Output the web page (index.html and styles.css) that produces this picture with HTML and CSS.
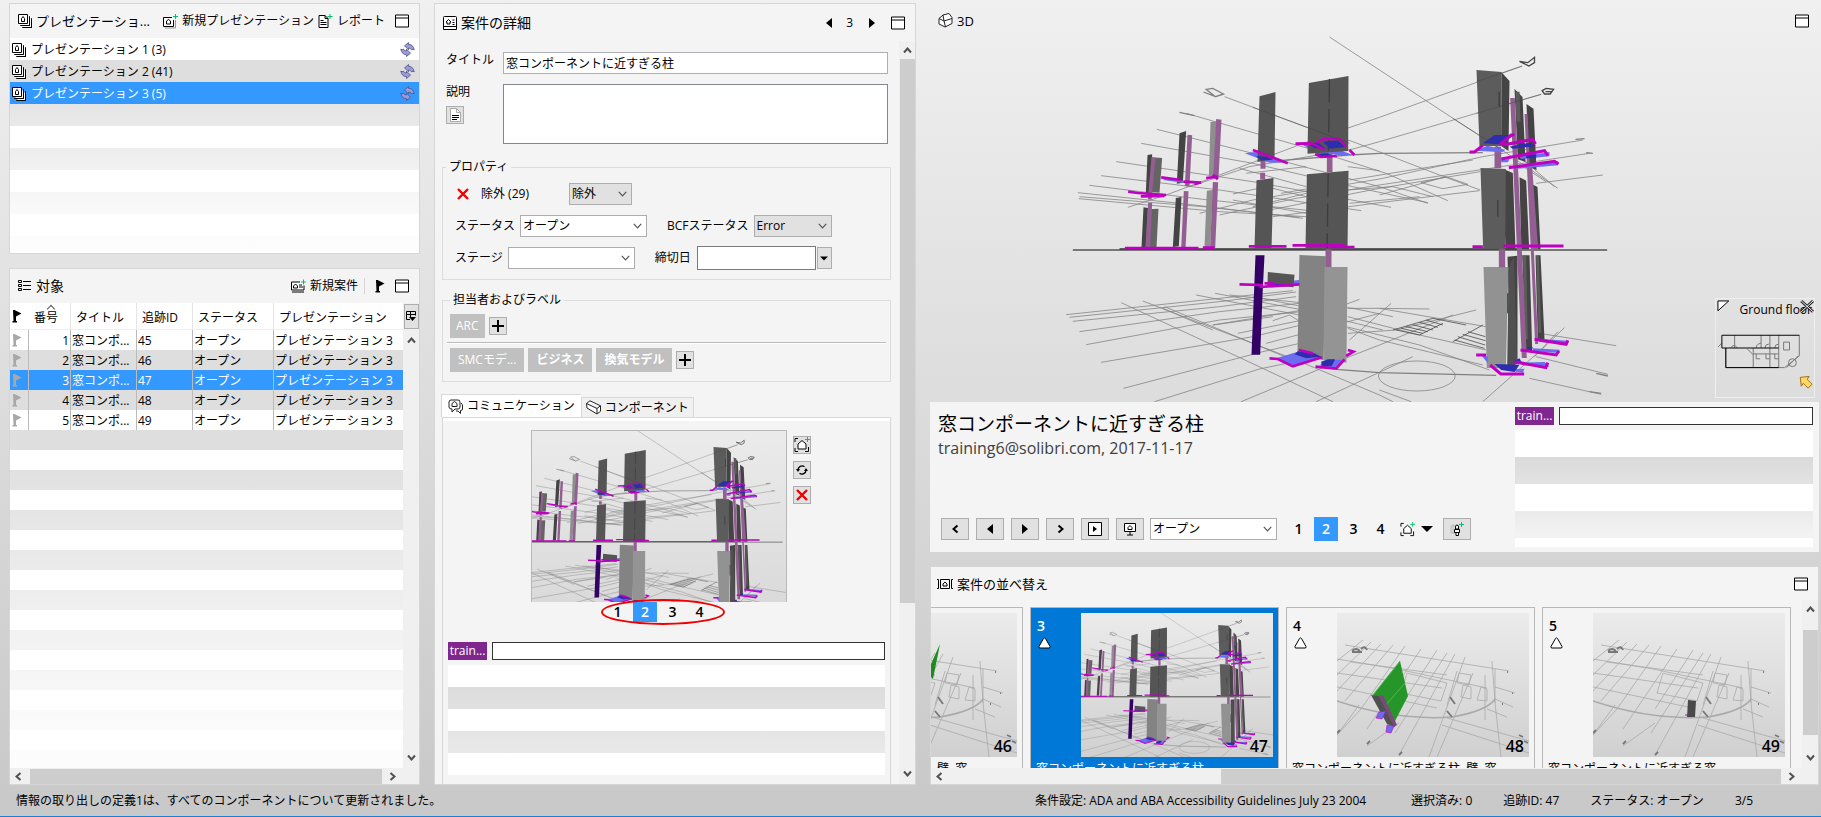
FILE: index.html
```
<!DOCTYPE html>
<html lang="ja">
<head>
<meta charset="utf-8">
<title>プレゼンテーション</title>
<link rel="stylesheet" href="styles.css">
</head>
<body>
<svg class="defs" aria-hidden="true">
  <symbol id="i-stack" viewBox="0 0 14 14"><g fill="#fff" stroke="#000"><path d="M4.5 13.500h9v-9"/><path d="M2.500 11.500h9v-9"/><path d="M.5.500h9v9h-9z"/><path d="M11.500 2.500v9h-9M13.500 4.500v9h-9" fill="none"/><path d="M3.500 7.500v-3l1.500-2 1.500 2v3z" stroke-width="1"/></g></symbol>
  <symbol id="i-newpres" viewBox="0 0 15 15"><path d="M12.500 6v8H2" fill="none" stroke="#999"/><path d="M9 3.500H.5v9h10V6" fill="#fff" stroke="#000"/><path d="M3.500 10v-3l2-1.500 2 1.500v3z" fill="#fff" stroke="#000"/><path d="M12.500 0v5M10 2.500h5" stroke="#00c070"/></symbol>
  <symbol id="i-report" viewBox="0 0 14 15"><path d="M.5 1.500h6l3 3v9h-9z" fill="#fff" stroke="#000"/><path d="M6.500 1.500v3h3M2 6.500h3M2 8.500h6M2 10.500h6" fill="none" stroke="#000"/><path d="M11.500 0v5M9 2.500h5" stroke="#00c070"/></symbol>
  <symbol id="i-window" viewBox="0 0 14 13"><path d="M.5.500h13v12H.5zM.5 3.500h13" fill="#fff" stroke="#000"/></symbol>
  <symbol id="i-sync" viewBox="0 0 15 15"><g fill="#9c9cd4" stroke="#50508c" stroke-width=".8"><path id="sync-half" d="M4.500 3.800 8.500.500v1.800q4.800 0 5.700 5.700l-1.200-.8-1.400.8q-.6-2-3.100-2v1.800z"/><path d="M10.500 11.200 6.500 14.500v-1.800q-4.800 0-5.700-5.700l1.200.8 1.400-.8q.6 2 3.100 2V7.200z"/></g></symbol>
  <symbol id="i-list" viewBox="0 0 14 12"><path d="M.5.500h3v2h-3zM.5 4.500h3v2h-3zM.5 8.500h3v2h-3z" fill="#fff" stroke="#000"/><path d="M5 1.500h8M5 5.500h8M5 9.500h8" stroke="#000"/></symbol>
  <symbol id="i-newcase" viewBox="0 0 15 14"><path d="M9 2.500H.5v8H13V6" fill="#fff" stroke="#000"/><path d="M1 12.500h12" stroke="#000"/><path d="M2.500 8.500v-2l2-2 2 2v2zM8 5.500h3M8 7.500h4" fill="none" stroke="#000"/><path d="M12.500 0v5M10 2.500h5" stroke="#00c070"/></symbol>
  <symbol id="i-flag" viewBox="0 0 10 13"><path d="M1 0h1.500l7 3.500-5.500 3V11h1v1.500H.5V11h1z" fill="currentColor"/></symbol>
  <symbol id="i-detail" viewBox="0 0 14 14"><path d="M.5 1.500q0-1 1-1h11q1 0 1 1v12H.5z" fill="#fff" stroke="#000"/><path d="M1 10.500h12" stroke="#000"/><path d="M3 6h1v2h3V6h1L5.500 3.500zM9.500 4h2M9.500 6.500h2M9.500 8.500h2" fill="none" stroke="#000"/></symbol>
  <symbol id="i-up" viewBox="0 0 9 7"><path d="m1 5.500 3.500-4 3.500 4" fill="none" stroke="#505050" stroke-width="2"/></symbol>
  <symbol id="i-down" viewBox="0 0 9 7"><path d="m1 1.500 3.500 4 3.500-4" fill="none" stroke="#505050" stroke-width="2"/></symbol>
  <symbol id="i-left" viewBox="0 0 7 9"><path d="m5.500 1-4 3.500 4 3.500" fill="none" stroke="currentColor" stroke-width="2"/></symbol>
  <symbol id="i-right" viewBox="0 0 7 9"><path d="m1.500 1 4 3.500-4 3.500" fill="none" stroke="currentColor" stroke-width="2"/></symbol>
  <symbol id="i-tleft" viewBox="0 0 6 10"><path d="M6 0v10L0 5z"/></symbol>
  <symbol id="i-tright" viewBox="0 0 6 10"><path d="M0 0v10l6-5z"/></symbol>
  <symbol id="i-tdown" viewBox="0 0 12 6"><path d="M0 0h12L6 6z"/></symbol>
  <symbol id="i-x" viewBox="0 0 12 12"><path d="m1 1 10 10M11 1 1 11" stroke="#f00000" stroke-width="2.400"/></symbol>
  <symbol id="i-doc" viewBox="0 0 11 14"><path d="M.5.500h6l4 4v9H.5z" fill="#fff" stroke="#aaa"/><path d="M6.500.500v4h4" fill="none" stroke="#aaa"/><path d="M2 7.500h7M2 9.500h7M2 11.500h5" stroke="#000"/></symbol>
  <symbol id="i-plus" viewBox="0 0 12 12"><path d="M6 0v12M0 6h12" stroke="#000" stroke-width="2"/></symbol>
  <symbol id="i-talk" viewBox="0 0 15 15"><path d="M3 1h7q2 0 2 2v5q0 2-2 2H7l-3 3v-3q-3 0-3-2V3q0-2 2-2z" fill="#fff" stroke="#222"/><path d="M4 7.500v-3l2.500-2L9 4.500v3z" fill="none" stroke="#222"/><path d="M13 4q1.500 1 1.500 3v3q0 1.500-2 1.500v3L10 12H8" fill="none" stroke="#222"/></symbol>
  <symbol id="i-beam" viewBox="0 0 15 15"><path d="M.5 3.500 4 .8l10.500 5v5.500L11 14 1 8zM.5 3.500 11 8.500l3.500-2.700M11 8.500V14" fill="#fff" stroke="#222"/></symbol>
  <symbol id="i-snap" viewBox="0 0 16 16"><path d="M1 5V1.500h3M1 11v3.500h3M14.500 10v4.500H11" fill="none" stroke="#000"/><path d="M4 12V7l4-3.500L12 7v5z" fill="#fff" stroke="#000"/><path d="M13.500 0v5M11 2.500h5" stroke="#00c070"/></symbol>
  <symbol id="i-refresh" viewBox="0 0 12 12"><path d="M2 6A4 4 0 0 1 8.500 2.800M10 6A4 4 0 0 1 3.500 9.200" fill="none" stroke="#000" stroke-width="1.300"/><path d="M0 5h4L2 8zM12 7H8l2-3z"/></symbol>
  <symbol id="i-cube" viewBox="0 0 15 15"><path d="m5 2 6-1.500 3 4v6L7 14 1 11V5.500zM1 5.500 6 8l1.500 6M6 8l8-2.500M6 8 5 2" fill="#fff" stroke="#222"/></symbol>
  <symbol id="i-play" viewBox="0 0 14 14"><path d="M.5.500h13v13H.5z" fill="#fff" stroke="#000"/><path d="M5 4v6l4-3z"/></symbol>
  <symbol id="i-screen" viewBox="0 0 14 14"><path d="M1.500 1.500h11v8h-11z" fill="#fff" stroke="#000"/><path d="M7 10v3M4 13h6M5 7.500v-2L7 3.500l2 2v2z" fill="none" stroke="#000"/></symbol>
  <symbol id="i-person" viewBox="0 0 14 14"><path d="M1 4h8v7H1zM3 2v10" fill="none" stroke="#bbb"/><path d="M5.500 5q0-2 1.500-2t1.500 2v2H5.500zM4.500 7.500h5v3h-5zM6 10.500v3h2.500v-3" fill="#fff" stroke="#000"/><path d="M11.500 0v5M9 2.500h5" stroke="#00c070"/></symbol>
  <symbol id="i-sort" viewBox="0 0 16 12"><path d="M0 1.500h1.500v9H0M16 1.500h-1.500v9H16M3.500 1.500h9v9h-9z" fill="none" stroke="#000"/><path d="M6 8V6l2-2 2 2v2z" fill="none" stroke="#000"/></symbol>
  <symbol id="i-cols" viewBox="0 0 10 11"><path d="M.5.500h9v4M.5.500v8H4M.5 3.500h9M4.500.500v6" fill="none" stroke="#000"/><path d="M3 6h7L6.500 10z"/></symbol>
  <symbol id="i-tri" viewBox="0 0 13 12"><path d="M5.500 1.500q1-1.200 2 0l4.500 8q.5 1.500-1 1.500H2q-1.500 0-1-1.500z" fill="#fff" stroke="#000"/></symbol>
  <symbol id="i-chev" viewBox="0 0 9 6"><path d="m.8.800 3.700 4 3.700-4" fill="none" stroke="#555" stroke-width="1.200"/></symbol>

  <!-- Building model: upper grid, columns per storey, lower grid -->
  <g id="model">
    <g fill="none" stroke="#808080" stroke-width="2.300">
      <path d="M1230 111 1380 210 1605 358 1740 445 1915 565M915 290 1165 383 1300 425 1560 525 1682 570M800 340 1165 445 1400 520 1585 602M712 388 1000 460 1380 560 1525 610M665 430 1000 490 1300 560 1525 608M590 485 1000 545 1415 622M545 527 900 570 1325 632M510 556 850 598 1200 635"/>
      <path d="M475 578 800 612 1150 655M480 590 850 620 1140 652M478 596 900 635 1160 650"/>
      <path d="M1808 198 1380 352 1165 425 900 525 740 585 625 622M1865 283 1380 425 1300 447 990 500 810 560M1990 420 1690 470 1380 537 1000 600 840 640M2010 460 1380 555 1130 595 900 645M2050 525 1850 550M1680 572 1380 608 1060 650M1682 515 1380 565 1050 630"/>
      <path d="M1040 485 1290 465 1380 460 1690 458" stroke-width="4"/>
      <path d="M940 582 1040 560 1160 590M960 505 1160 560M1285 500 1380 512M1085 580 1160 567M1505 548 1580 530 1645 553 1570 566zM1380 585 1580 530M1780 480 1880 545M1800 470 1905 560"/>
      <path d="M980 520 1160 500M1000 620 1160 580M940 600 1160 640M1290 540 1660 480M1285 570 1420 560 1540 590M1290 610 1500 590"/>
      <path d="M440 944 900 895 1120 872M450 952 900 905 1130 876M460 964 900 920 1130 890M480 995 900 935 1140 910M500 1034 900 960 1145 935M545 1087 1000 1010 1145 975M612 1165 1030 1055 1150 1028M705 1205 1020 1107 1150 1080"/>
      <path d="M605 908 1030 1105 1240 1205M670 903 1130 1080 1380 1185 1420 1205M735 920 1120 1080M830 885 1140 945 1500 1035 1710 1110M887 880 1140 928 1390 990M930 885 1300 925 1420 950M1060 962 1110 945 1150 970M1000 890 1150 920"/>
      <path d="M965 1205 1290 1070 1380 1035 1600 945M1190 1205 1330 1140 1480 1070M955 1000 1150 960 1320 898M880 975 1150 930M1040 1030 1380 940M1285 1000 1430 990 1670 930M1290 1020 1415 910M1285 925 1380 925 1530 927M1380 925 1700 980M1285 985 1380 1020 1690 1095M1285 950 1500 1005 1700 1050"/>
      <path d="M1250 1108 1380 1118 1730 1126" stroke-width="4"/>
      <ellipse cx="1492" cy="1128" rx="115" ry="45"/>
      <path d="M1860 1000 2090 1037M1850 1070 2065 1123M1830 1135 2045 1183M1690 1205 1870 1045 1935 983M1845 1070 1915 995M1380 1170 1475 1205M880 975 1060 950M730 925 880 990"/>
      <path d="M860 268 880 265 912 282 888 290zM852 276 888 290M780 337 825 347M1968 418 1995 416M2000 458 2020 460M2030 1120 2065 1128M2010 1175 2045 1180" stroke-width="4"/>
      <path d="M1800 184 1825 188 1845 172 1845 188 1828 198zM1868 272 1880 265 1902 268 1892 282 1875 282zM1878 275h18" stroke="#444" stroke-width="4"/>
      <path d="M1420 990 1540 955 1640 975M1430 990 1500 1005 1570 970M1445 985 1510 1000M1460 980 1525 995M1480 974 1540 990M1500 967 1555 982M1520 960 1570 975M1600 1025 1690 975M1605 1020 1695 1045M1615 1010 1697 1035M1630 1003 1698 1022M1645 995 1698 1010" stroke="#444"/>
    </g>
    <path d="M460 750h1603" stroke="#555" stroke-width="4"/><path d="M600 747H1800" stroke="#333" stroke-width="4"/>

    <!-- left-hand columns -->
    <g fill="#444"><path d="m684 465 14-2-5 117h-14zM780 400l20-7-10 155-18 3zM672 622l14 2-5 118h-15zM769 594l17-3-8 148-18 2z"/></g>
    <g fill="#646464"><path d="m697 472 31 2-8 104-31-2zM684 628l33-2-6 116h-33z"/></g>
    <g fill="#8e8e8e"><path d="m873 366 18-2-7 161-16 3zM862 572l18-2-8 172h-17z"/></g>
    <g fill="#935f93"><path d="m696 472 12 1-12 126-11-1zM686 608l12 1-6 134h-14zM804 404l14 2-8 154-14-3zM793 573l14 1-9 172h-13zM890 357l16 2-9 175-16-2zM880 546l16 1-9 198h-15zM1023 480h15v26h-15zM1022 518h15v20h-15zM1222 452h17v64h-17zM1218 748h18v56h-18z"/></g>
    <g fill="#6c6cf0"><path d="m976 460 30-4 85 32h-40zM1150 435l40-10 105 38-20 4-90-10zM740 535l55 8v6l-65-9zM1118 842l22-2v10l-22 4z"/></g>
    <g fill="#555"><path d="m1020 289 48-13-3 200-51 10zM1168 249l119-21-1 225-122 8zM1011 541l51-7-6 211h-51zM1162 523l125-11-3 236h-126zM1045 816l80 8-3 38-78-6z"/></g>
    <path d="m1230 237-3 215M1226 520l-3 225" stroke="#3d3d3d" stroke-width="4" stroke-dasharray="70 20"/>
    <g fill="#2d2db0"><path d="m1165 432 30-5 25 20-35-3zM1210 425l45-4 22 20-45 5zM1010 468l30 2 20 10-35 1zM1190 460l35 0 15 8-35 2zM1045 852h60l-30 8z"/></g>
    <path d="m1008 766h27l-6 120-7 178h-26z" fill="#330066"/>
    <path d="M1140 765l80 4-8 312-78-25z" fill="#838383"/><path d="M1215 801h69l-3 287-69-8z" fill="#949494"/>
    <g fill="#6c6cf0"><path d="m1065 1076 75-22 65 18-80 25zM1200 1096l30-17 45 0-30 27z"/></g>
    <g fill="#2d2db0"><path d="m1135 1054 50 6 20 10-45 5-35-12zM1205 1085l20-7h22l-10 20-30 3z"/></g>
    <g fill="none" stroke="#c000c0" stroke-width="8">
      <path d="M626 575 655 579 740 585M664 589 735 588M725 532 785 540M792 545 845 548M825 553 845 547M860 534 895 530M880 524 895 538M1000 450 1105 490M1128 431 1175 430 1215 449M1190 428 1215 416 1260 417 1280 440M1290 450 1305 465M1187 462 1205 471 1252 468M988 739h113M1119 736 1275 736M1230 741h75M616 744H837M850 743h35M960 853 1030 855M1020 861 1140 853M1035 850h30M1050 1075 1075 1077 1120 1099 1208 1072M1188 1100 1250 1106 1275 1078M1280 1068 1302 1055 1285 1050M1138 1050 1180 1060"/>
    </g>

    <!-- right-hand columns -->
    <g fill="#444"><path d="m1746 217 24 26-3 210-22-15zM1785 267l24 24 9 195-23-8zM1821 312l21 14 9 184-22-10zM1750 506l30 13 8 228h-30zM1800 532l20 10 9 206h-24zM1838 553l16 8 9 187h-20zM1764 770l30-3 0 320-20 14zM1808 766h22l8 284-18 5zM1848 766h15l12 252-20 4z"/></g>
    <g fill="#5c5c5c"><path d="M1671 210l75 6-1 222h-65zM1683 504l76 3-2 240h-66zM1788 275h12l3 90h-12zM1810 768h10l5 250h-10zM1850 768h8l7 230h-8z"/></g>
    <path d="M1692 801h75l-8 303h-57z" fill="#929292"/><path d="m1768 801 15-30 10 320-30 14z" fill="#505050"/>
    <path d="m1739 275v45M1735 600v50M1765 880v60" stroke="#3d3d3d" stroke-width="4"/>
    <g fill="#935f93"><path d="M1725 440h20v65h-20zM1738 748h19v54h-19zM1772 294h14l36 780h-15zM1815 342h9l32 690h-9zM1824 500h14l18 248h-14z"/></g>
    <g fill="#6c6cf0"><path d="m1668 452 35-15 55 12-10 8zM1745 480l25-3-5 10h-20zM1796 500l120-16v12l-120 10zM1800 470l90-14v13l-85 8zM1685 1065l20 5v20zM1780 1108l35-2 -5 12-60-10zM1800 1088l75-2 15 14-80-4zM1840 1045l80 4v10l-80-5zM1855 1016l90 6v10l-85-6z"/></g>
    <g fill="#2d2db0"><path d="m1690 430 35-25h60l-45 28zM1770 440l60-12 20 10-70 8zM1820 465l30-2v12h-30zM1725 1092l75 2-15 22-40-6zM1780 1085l20-10 8 15zM1820 1042h20l-5 12z"/></g>
    <g fill="none" stroke="#c000c0" stroke-width="9">
      <path d="M1650 456h15l25-20M1740 435l35-30h10M1750 435 1840 418l8 14M1745 477 1875 452l10 15M1768 503 1905 484l12 8M1659 740h31M1752 738h180M1670 1065h30M1712 1095l32 27h70M1785 1085l94 18 6-15M1803 1050 1910 1065l8-12M1845 1018l95 15 5-12"/>
    </g>
    <g stroke="#444" stroke-width="2" opacity=".7"><path d="M1000 322 1165 383 1290 430M1671 245 1808 198M1671 340 1865 283M1600 355 1740 445"/></g>
  </g>

  <!-- Floor plan seen from above -->
  <g id="floor" fill="none" stroke="#aaa" stroke-width=".8">
    <path d="M8 32 160 56M0 46 60 56 150 75M14 49 110 62M0 60 105 75M0 74 100 95M26 27 0 48M34 29 0 62M44 31 0 78M56 32 8 88M68 33 24 96M84 36 30 116M100 37 62 96M110 40 58 120M118 41 62 142M128 44 92 144M136 60 100 144M155 48 158 90 164 144M120 58 110 92M148 62v45"/>
    <path d="M0 88Q60 108 115 104 150 98 158 86" stroke-width="1.500"/>
    <path d="M158 56v34M22 92 0 122M62 110 30 133M0 122 24 96M110 105 192 128M105 112 192 140M70 60l40 10-6 18-40-8zM122 60l12 2-2 10-12-2zM126 72l8 2v12l-10-2zM144 74l6 2v12l-10-1z"/>
    <path d="M15 38q4-4 8 0M24 36q4-4 6 1M15 39h10M113 84l5 7M110 98l5 6M0 120l3-3M30 131l3-3M62 142l3-3M170 59h1M175 80h1M165 91h1M182 122l4 2M187 128l4 2" stroke="#777" stroke-width="1.800"/>
    <path d="M160 56l12 2M158 74l20 6M158 86l18 8M150 96l20 8"/>
  </g>
</svg>

<main class="app">
  <div class="column">
    <section class="panel">
      <header class="bar">
        <svg class="s14"><use href="#i-stack"/></svg><h2 class="grow narrow">プレゼンテーショ...</h2>
        <button class="link"><svg class="s15"><use href="#i-newpres"/></svg>新規プレゼンテーション</button>
        <button class="link"><svg class="s15"><use href="#i-report"/></svg>レポート</button>
        <button class="link win" aria-label="最大化"><svg class="s14"><use href="#i-window"/></svg></button>
      </header>
      <ul class="pres stripes22">
        <li><svg class="s14"><use href="#i-stack"/></svg><span>プレゼンテーション 1 (3)</span><svg class="s15"><use href="#i-sync"/></svg></li>
        <li><svg class="s14"><use href="#i-stack"/></svg><span>プレゼンテーション 2 (41)</span><svg class="s15"><use href="#i-sync"/></svg></li>
        <li class="selected"><svg class="s14"><use href="#i-stack"/></svg><span>プレゼンテーション 3 (5)</span><svg class="s15"><use href="#i-sync"/></svg></li>
      </ul>
    </section>

    <section class="panel fill">
      <header class="bar">
        <svg class="s14"><use href="#i-list"/></svg><h2 class="grow">対象</h2>
        <button class="link"><svg class="s15"><use href="#i-newcase"/></svg>新規案件</button>
        <span class="sep"></span>
        <button class="link" aria-label="フラグ"><svg class="flag"><use href="#i-flag"/></svg></button>
        <button class="link win" aria-label="最大化"><svg class="s14"><use href="#i-window"/></svg></button>
      </header>
      <div class="split">
        <div class="tablebox stripes20">
          <table>
            <colgroup><col class="c-flag"><col class="c-no"><col class="c-title"><col class="c-id"><col class="c-stat"><col></colgroup>
            <thead><tr><th><svg class="flag"><use href="#i-flag"/></svg></th><th class="sorted">番号</th><th>タイトル</th><th>追跡ID</th><th>ステータス</th><th>プレゼンテーション</th></tr></thead>
            <tbody>
              <tr><td><svg class="flag"><use href="#i-flag"/></svg></td><td>1</td><td>窓コンポ...</td><td>45</td><td>オープン</td><td>プレゼンテーション 3</td></tr>
              <tr><td><svg class="flag"><use href="#i-flag"/></svg></td><td>2</td><td>窓コンポ...</td><td>46</td><td>オープン</td><td>プレゼンテーション 3</td></tr>
              <tr class="selected"><td><svg class="flag"><use href="#i-flag"/></svg></td><td>3</td><td>窓コンポ...</td><td>47</td><td>オープン</td><td>プレゼンテーション 3</td></tr>
              <tr><td><svg class="flag"><use href="#i-flag"/></svg></td><td>4</td><td>窓コンポ...</td><td>48</td><td>オープン</td><td>プレゼンテーション 3</td></tr>
              <tr><td><svg class="flag"><use href="#i-flag"/></svg></td><td>5</td><td>窓コンポ...</td><td>49</td><td>オープン</td><td>プレゼンテーション 3</td></tr>
            </tbody>
          </table>
        </div>
        <div class="vbar">
          <button class="colbtn" aria-label="列"><svg><use href="#i-cols"/></svg></button>
          <svg class="arrow"><use href="#i-up"/></svg><span class="grow"></span><svg class="arrow"><use href="#i-down"/></svg>
        </div>
      </div>
      <div class="hbar"><svg class="harrow"><use href="#i-left"/></svg><span class="thumb grow"></span><svg class="harrow"><use href="#i-right"/></svg><span class="corner"></span></div>
    </section>
  </div>

  <section class="panel detail">
    <header class="bar tall">
      <svg class="s14"><use href="#i-detail"/></svg><h2 class="grow">案件の詳細</h2>
      <button class="link" aria-label="前へ"><svg class="tri"><use href="#i-tleft"/></svg></button><span class="num">3</span>
      <button class="link" aria-label="次へ"><svg class="tri"><use href="#i-tright"/></svg></button>
      <button class="link win far" aria-label="最大化"><svg class="s14"><use href="#i-window"/></svg></button>
    </header>
    <div class="split">
      <div class="form">
        <div class="fields">
          <label for="title">タイトル</label>
          <input id="title" value="窓コンポーネントに近すぎる柱">
          <div><label for="desc">説明</label><button class="tool" aria-label="文書"><svg class="doc"><use href="#i-doc"/></svg></button></div>
          <textarea id="desc"></textarea>
        </div>
        <fieldset class="props">
          <legend>プロパティ</legend>
          <div class="row first"><svg class="s12"><use href="#i-x"/></svg><label class="excl" for="decision">除外 (29)</label>
            <span class="sel grey w63"><select id="decision"><option>除外</option></select><svg><use href="#i-chev"/></svg></span></div>
          <div class="row"><label for="status">ステータス</label>
            <span class="sel w127"><select id="status"><option>オープン</option></select><svg><use href="#i-chev"/></svg></span>
            <label class="second" for="bcf">BCFステータス</label>
            <span class="sel grey w78"><select id="bcf"><option>Error</option></select><svg><use href="#i-chev"/></svg></span></div>
          <div class="row"><label for="stage">ステージ</label>
            <span class="sel w127"><select id="stage"><option></option></select><svg><use href="#i-chev"/></svg></span>
            <label class="second" for="due">締切日</label>
            <input id="due" class="due"><button class="drop" aria-label="日付"><svg><use href="#i-tdown"/></svg></button></div>
        </fieldset>
        <fieldset class="labels">
          <legend>担当者およびラベル</legend>
          <div class="row"><span class="tag">ARC</span><button class="tool" aria-label="担当者を追加"><svg class="s12"><use href="#i-plus"/></svg></button></div>
          <hr>
          <div class="row"><span class="tag wide">SMCモデ...</span><span class="tag wide bold">ビジネス</span><span class="tag wide bold">換気モデル</span><button class="tool" aria-label="ラベルを追加"><svg class="s12"><use href="#i-plus"/></svg></button></div>
        </fieldset>
        <div class="tabs">
          <button class="tab on"><svg class="s15"><use href="#i-talk"/></svg>コミュニケーション</button><button class="tab"><svg class="s15"><use href="#i-beam"/></svg>コンポーネント</button>
        </div>
        <div class="talk">
          <div class="shot">
            <span class="lead"></span>
            <svg class="view" viewBox="642 120 1440 970" preserveAspectRatio="xMidYMin slice"><use href="#model"/></svg>
            <div class="tools">
              <button class="tool" aria-label="撮影"><svg class="s16"><use href="#i-snap"/></svg></button>
              <button class="tool" aria-label="更新"><svg class="s12"><use href="#i-refresh"/></svg></button>
              <button class="tool" aria-label="削除"><svg class="s12"><use href="#i-x"/></svg></button>
            </div>
          </div>
          <div class="pager small"><button>1</button><button class="on">2</button><button>3</button><button>4</button>
            <svg class="ring" viewBox="0 0 124 26"><ellipse cx="62" cy="13" rx="61" ry="12" fill="none" stroke="#f00000" stroke-width="1.800"/></svg></div>
          <div class="comment"><label class="user" for="c1">train...</label><input id="c1"></div>
          <div class="notes stripes22"></div>
        </div>
      </div>
      <div class="vbar pad"><svg class="arrow"><use href="#i-up"/></svg><span class="thumb t74"></span><span class="grow"></span><svg class="arrow"><use href="#i-down"/></svg></div>
    </div>
  </section>

  <div class="column right">
    <section class="scene">
      <svg class="model" viewBox="30 0 2670 1206" preserveAspectRatio="xMidYMid slice"><use href="#model"/></svg>
      <header class="bar tall clear"><svg class="s15"><use href="#i-cube"/></svg><h2 class="grow narrow">3D</h2>
        <button class="link win" aria-label="最大化"><svg class="s14"><use href="#i-window"/></svg></button></header>
      <div class="minimap"><span>Ground floor</span>
        <svg viewBox="0 0 100 100">
          <path d="M2 2h11L2 12z" fill="#fff" stroke="#000"/>
          <path d="m87 2 12 11M99 2 87 13" stroke="#222" stroke-width="3"/><path d="m87 2 12 11M99 2 87 13" stroke="#fff"/>
          <g fill="none" stroke="#777"><path d="M10 50v20h54M19 37v13M46 37v13M55 37v33M64 37v33M85 37v21L70 70h-6M38 50v20M38 56h26M69 44h6v8h-6z"/><circle cx="78" cy="65" r="4"/><path d="m72 70 12-12M41 50q0-4 5-5M50 50q0-4 4-4M60 50q0-4 4-4M41 56v5h4M51 56v5h4M60 56v5h4M2 49l4-4M15 50q3-5 7 0M32 51l6 6"/></g>
          <path d="M85 37H6v13h58M10 50v20h54" fill="none" stroke="#000"/>
          <path d="m86 80 9-1-2 3 5 5-4 4-5-5-2 3z" fill="#ffd868" stroke="#a07010"/>
        </svg></div>
    </section>
    <section class="info">
      <div class="infomain">
        <h1>窓コンポーネントに近すぎる柱</h1>
        <p>training6@solibri.com, 2017-11-17</p>
        <div class="controls">
          <button class="cbtn" aria-label="最初"><svg class="h79"><use href="#i-left"/></svg></button>
          <button class="cbtn" aria-label="前へ"><svg class="tri"><use href="#i-tleft"/></svg></button>
          <button class="cbtn" aria-label="次へ"><svg class="tri"><use href="#i-tright"/></svg></button>
          <button class="cbtn" aria-label="最後"><svg class="h79"><use href="#i-right"/></svg></button>
          <button class="cbtn" aria-label="再生"><svg class="s14"><use href="#i-play"/></svg></button>
          <button class="cbtn" aria-label="画面"><svg class="s14"><use href="#i-screen"/></svg></button>
          <span class="sel w127"><select aria-label="ステータス"><option>オープン</option></select><svg><use href="#i-chev"/></svg></span>
          <div class="pager"><button>1</button><button class="on">2</button><button>3</button><button>4</button></div>
          <button class="link snap" aria-label="撮影"><svg class="s15"><use href="#i-snap"/></svg><svg class="dd"><use href="#i-tdown"/></svg></button>
          <button class="cbtn" aria-label="追加"><svg class="s14"><use href="#i-person"/></svg></button>
        </div>
      </div>
      <div class="infoside">
        <div class="comment"><label class="user" for="c2">train...</label><input id="c2"></div>
        <div class="notes stripes27"></div>
      </div>
    </section>
    <section class="panel sorter">
      <header class="bar"><svg class="s16"><use href="#i-sort"/></svg><h2 class="grow narrow">案件の並べ替え</h2>
        <button class="link win" aria-label="最大化"><svg class="s14"><use href="#i-window"/></svg></button></header>
      <div class="split">
        <div class="cards">
          <article class="card cut"><svg class="view" viewBox="0 0 192 144"><use href="#floor"/><path d="M102 60 115 31 108 66z" fill="#1f8a1f"/></svg><b>46</b><p class="tail">壁, 窓</p></article>
          <article class="card on"><span class="no">3</span><svg class="warn"><use href="#i-tri"/></svg><svg class="view" viewBox="642 120 1440 1080"><use href="#model"/></svg><b>47</b><p>窓コンポーネントに近すぎる柱</p></article>
          <article class="card"><span class="no">4</span><svg class="warn"><use href="#i-tri"/></svg><svg class="view" viewBox="0 0 192 144"><use href="#floor"/><path d="m36 82 27-34 8 35-14 27z" fill="#27962a"/><path d="m48 93 20-23M36 82l27-34" stroke="#4db850" fill="none"/><path d="m34 82 8 1 16 31-8-3z" fill="#505050"/><path d="m42 83 4-1 14 30-3 2z" fill="#7a4a7a"/><path d="m42 99 7-1-4 8-6-1zM50 112l7 1-3 7-5-1z" fill="#6c6cf0" stroke="#c000c0" stroke-width=".6"/></svg><b>48</b><p>窓コンポーネントに近すぎる柱, 壁, 窓</p></article>
          <article class="card"><span class="no">5</span><svg class="warn"><use href="#i-tri"/></svg><svg class="view" viewBox="0 0 192 144"><use href="#floor"/><path d="m95 87 8 1-1 16h-8z" fill="#4a4a4a"/><path d="M92 102h3" stroke="#c000c0"/></svg><b>49</b><p>窓コンポーネントに近すぎる窓</p></article>
        </div>
        <div class="vbar pad"><svg class="arrow"><use href="#i-up"/></svg><span class="thumb grow short"></span><svg class="arrow"><use href="#i-down"/></svg></div>
      </div>
      <div class="hbar"><svg class="harrow"><use href="#i-left"/></svg><span class="track"></span><span class="thumb t65"></span><svg class="harrow"><use href="#i-right"/></svg><span class="corner"></span></div>
    </section>
  </div>
</main>
<footer class="status"><span class="msg">情報の取り出しの定義1は、すべてのコンポーネントについて更新されました。</span>
  <div class="facts"><span class="rules">条件設定: ADA and ABA Accessibility Guidelines July 23 2004</span><span>選択済み: 0</span><span>追跡ID: 47</span><span>ステータス: オープン</span><span>3/5</span></div></footer>
</body>
</html>
```
FILE: styles.css
```
* { box-sizing: border-box; }
body {
  margin: 0; height: 100vh; display: flex; flex-direction: column;
  background: linear-gradient(#f0f0f0, #c8c8c8);
  border-bottom: 1px solid #1880d8;
  font: 12px/16px "Open Sans", "Noto Sans CJK JP", sans-serif; color: #000;
}
button, input, select, textarea { font: inherit; color: inherit; margin: 0; border-radius: 0; }
button { background: none; border: 0; padding: 0; display: flex; align-items: center; justify-content: center; }
h1, h2, p, ul { margin: 0; padding: 0; font-weight: normal; }
svg { display: block; flex: none; }
.defs { position: absolute; width: 0; height: 0; }
.grow { flex: 1; min-width: 0; }
.s12 { width: 12px; height: 12px; } .s14 { width: 14px; height: 14px; }
.s15 { width: 15px; height: 15px; } .s16 { width: 16px; height: 16px; }
.flag { width: 10px; height: 13px; } .tri { width: 6px; height: 10px; }
.h79 { width: 7px; height: 10px; } .doc { width: 11px; height: 14px; }

.app {
  flex: 1; min-height: 0; padding: 3px 2px 0 9px; display: grid; gap: 14px;
  grid-template-columns: minmax(0, 411fr) minmax(0, 482fr) minmax(0, 889fr);
  grid-template-rows: minmax(0, 1fr);
}
.column { display: flex; flex-direction: column; gap: 14px; min-height: 0; }
.panel { background: #f4f4f4; border: 1px solid #d6d6d6; display: flex; flex-direction: column; min-height: 0; }
.fill { flex: 1; }
.bar { display: flex; align-items: center; height: 34px; flex: none; padding: 0 10px 0 8px; }
.bar.tall { height: 37px; }
.bar h2 { font-size: 14px; line-height: 20px; padding-left: 4px; white-space: nowrap; }
.bar .narrow { font-size: 13px; }
.link { gap: 4px; white-space: nowrap; margin-left: 4px; }
.win { margin-left: 10px; }
.far { margin-left: 16px; }
.sep { width: 1px; height: 16px; background: #d6d6d6; margin: 0 6px; }
.num { margin: 0 12px 0 14px; }

.pres { list-style: none; height: 215px; }
.pres li { display: flex; align-items: center; height: 22px; padding: 1px 4px 0 2px; gap: 5px; }
.pres span { flex: 1; }
.pres li:nth-child(even) { background: #dedede; }
.pres .selected, tbody .selected { background: #3399ff; color: #fff; }
.stripes22 { background: linear-gradient(#fff0, #fffffff0 190px), repeating-linear-gradient(#fff 0 22px, #d8d8d8 22px 44px); }
.stripes27 { background: linear-gradient(#fff0 20px, #fffffff0 140px), repeating-linear-gradient(#fff 0 27px, #d8d8d8 27px 54px); }
.stripes20 { background: linear-gradient(#fff0 140px, #ffffffe8 430px), repeating-linear-gradient(#fff 0 20px, #dedede 20px 40px) 0 27px; }

.split { display: flex; flex: 1; min-height: 0; }
.tablebox { flex: 1; min-width: 0; overflow: hidden; }
table { border-collapse: separate; border-spacing: 0; table-layout: fixed; width: 100%; }
.c-flag { width: 19px; } .c-no { width: 42px; } .c-title { width: 66px; } .c-id { width: 56px; } .c-stat { width: 81px; }
th { height: 27px; background: #fff; font-weight: normal; text-align: left; padding: 3px 0 0 5px; border-right: 1px solid #e4e4e4; border-bottom: 1px solid #eee; white-space: nowrap; }
th:first-child, td:first-child { padding: 0 0 0 2px; }
th:first-child { border-right: 0; }
th.sorted { position: relative; }
th.sorted::before { content: ""; position: absolute; left: 19px; top: 3px; width: 5px; height: 5px; border: solid #555; border-width: 1px 0 0 1px; transform: rotate(45deg); }
td { height: 20px; padding: 1px 0 0 1px; white-space: nowrap; border-right: 1px solid #bbb; }
td:last-child, th:last-child { border-right: 0; }
td:nth-child(2) { text-align: right; padding-right: 1px; }
td .flag { color: #a8a8a8; }
tbody tr { background: #fff; }
tbody tr:nth-child(even) { background: #dedede; }

.vbar { width: 16px; flex: none; background: #f0f0f0; display: flex; flex-direction: column; align-items: center; padding-bottom: 2px; }
.vbar.pad { padding-top: 6px; }
.arrow { width: 9px; height: 7px; margin: 0 0 5px; }
.thumb { background: #cdcdcd; }
.vbar .thumb { width: 15px; }
.t74 { flex: 0 0 74%; }
.short { margin: 12px 0 19px; }
.colbtn { width: 15px; height: 25px; margin: 1px 0 8px; background: #e1e1e1; border: 1px solid #adadad; }
.colbtn svg { width: 10px; height: 11px; }
.hbar { display: flex; height: 16px; flex: none; align-items: center; background: #f0f0f0; color: #505050; }
.hbar .thumb { height: 15px; }
.harrow { width: 7px; height: 9px; margin: 0 8px 0 5px; }
.thumb + .harrow { margin: 0 5px 0 7px; }
.corner { width: 18px; }
.track { flex: 27; } .t65 { flex: 56; }

.form { flex: 1; min-width: 0; padding: 11px 7px 0 6px; overflow: hidden; display: flex; flex-direction: column; margin-right: 1px; }
.fields { display: grid; grid-template-columns: 57px 1fr; grid-template-rows: 22px 60px; gap: 10px 0; padding: 0 3px 0 5px; flex: none; }
.fields input, .fields textarea { width: 100%; height: 100%; background: #fff; border: 1px solid #adadb4; padding: 0 2px; resize: none; display: block; }
.fields textarea { border-color: #828790; }
.tool { width: 18px; height: 18px; background: #e1e1e1; border: 1px solid #adadad; flex: none; }
.fields .tool { margin: 6px 0 0; }
fieldset { margin: 0; padding: 0; border: 1px solid #dcdcdc; min-width: 0; flex: none; }
.props { margin: 15px 0 0 1px; height: 121px; }
legend { padding: 0 3px; margin-left: 3px; }
.row { display: flex; align-items: center; }
.props .row { height: 22px; margin: 0 0 10px 12px; }
.props .row.first { margin: 8px 0 10px 14px; }
.excl { margin-left: 12px; width: 88px; }
.sel { position: relative; display: block; height: 22px; }
.sel select { appearance: none; width: 100%; height: 100%; background: #fff; border: 1px solid #adadad; padding: 0 2px; display: block; }
.sel.grey select { background: #e1e1e1; }
.sel svg { position: absolute; right: 5px; top: 8px; width: 9px; height: 6px; pointer-events: none; }
.w63 { width: 63px; } .w78 { width: 78px; } .w127 { width: 127px; }
.row > .sel { margin-left: 5px; } .first > .sel { margin-left: 0; }
.second { margin-left: 20px; }
.due { width: 119px; height: 24px; border: 1px solid #7a7a7a; margin: 0 1px 0 6px; }
.drop { width: 15px; height: 22px; background: #e1e1e1; border: 1px solid #adadad; }
.drop svg { width: 8px; height: 5px; }
.labels { margin: 12px 0 0 1px; height: 90px; padding: 0 4px; }
.labels .row { gap: 4px; padding-left: 3px; height: 24px; margin-top: 6px; }
.labels hr { border: 0; border-top: 1px solid #bbb; border-bottom: 1px solid #fff; margin: 4px 0; }
.labels hr + .row { margin-top: 0; }
.tag { background: #c0c0c0; color: #fff; height: 24px; line-height: 24px; padding: 0 6px; }
.wide { padding: 0 8px; }
.bold { font-weight: bold; }
.tabs { display: flex; align-items: flex-end; flex: none; margin-top: 12px; }
.tab { height: 20px; border: 1px solid #d9d9d9; border-bottom: 0; padding: 0 4px; gap: 4px; background: #f0f0f0; }
.tab.on { height: 23px; background: #fff; border-right-width: 0; padding: 0 6px; }
.talk { flex: 1; min-height: 0; margin-left: 1px; border: 1px solid #d9d9d9; border-bottom: 0; box-shadow: inset 0 3px #fff; padding: 12px 5px 0; display: flex; flex-direction: column; }
.shot { display: flex; justify-content: center; flex: none; }
.lead { width: 8px; }
.shot .view { width: 256px; height: 172px; border: 1px solid #b8b8b8; border-bottom: 0; background: linear-gradient(#ebebeb, #dadada); }
.tools { display: flex; flex-direction: column; gap: 7px; padding: 6px 0 0 6px; }
.pager { display: flex; align-items: center; font-size: 14px; position: relative; }
.pager button { width: 27px; height: 24px; font-weight: 600; }
.pager .on { background: #3399ff; color: #fff; width: 24px; margin: 0 2px; }
.pager.small { align-self: center; flex: none; margin-right: 16px; }
.pager.small button { height: 20px; }
.ring { position: absolute; left: -3px; top: -3px; width: 124px; height: 26px; }
.comment { display: flex; gap: 5px; height: 18px; flex: none; }
.talk .comment { margin: 20px 0 5px; }
.user { background: #7f278f; color: #fff; width: 39px; text-align: center; line-height: 18px; }
.comment input { flex: 1; min-width: 0; background: #fff; border: 1px solid #333; }
.talk .notes { height: 110px; flex: none; }

.right { gap: 0; margin-top: -3px; }
.scene { position: relative; flex: 1; min-height: 0; }
.scene .model { position: absolute; inset: 0; width: 100%; height: 100%; }
.clear { position: relative; margin-top: 2px; }
.minimap { position: absolute; right: 4px; bottom: 4px; width: 100px; height: 100px; border: 1px solid #eee; }
.minimap svg { position: absolute; inset: 0; }
.minimap span { position: absolute; right: 2px; top: 3px; white-space: nowrap; }
.info { background: #f4f4f4; display: flex; flex: none; height: 150px; }
.infomain { flex: 1; padding: 10px 0 11px 8px; display: flex; flex-direction: column; }
.info h1 { font-size: 19px; line-height: 24px; }
.info p { font-size: 16px; line-height: 24px; color: #404040; }
.controls { display: flex; align-items: center; gap: 7px; margin-top: auto; padding-left: 3px; }
.cbtn { width: 28px; height: 22px; background: #e1e1e1; border: 1px solid #adadad; }
.controls .sel { margin-left: -1px; }
.controls .pager { margin-left: 1px; }
.snap { margin: 0 3px 0 -1px; gap: 6px; }
.dd { width: 12px; height: 6px; }
.infoside { width: 304px; padding: 5px 6px 5px 0; flex: none; display: flex; flex-direction: column; gap: 5px; }
.infoside .notes { flex: 1; }
.sorter { margin-top: 15px; height: 218px; flex: none; border-top: 0; }
.sorter .bar { height: 33px; padding-left: 6px; }
.cards { flex: 1; min-width: 0; overflow: hidden; display: flex; gap: 7px; padding: 7px 0 0; margin-right: 2px; }
.card { flex: none; width: 249px; height: 170px; border: 1px solid #b8b8b8; padding: 5px; position: relative; }
.card .view { width: 192px; height: 144px; margin-left: auto; background: linear-gradient(#ebebeb, #d0d0d0); }
.cut { margin-left: -157px; }
.card.on { background: #0078d7; color: #fff; }
.no { position: absolute; left: 6px; top: 8px; font-size: 14px; line-height: 20px; font-weight: 600; }
.warn { position: absolute; left: 7px; top: 29px; width: 13px; height: 12px; }
.card b { position: absolute; right: 10px; bottom: 20px; font-size: 16px; line-height: 20px; font-weight: 600; color: #000; }
.card p { padding-top: 4px; white-space: nowrap; }
.card .tail { padding-left: 157px; }

.status { height: 31px; flex: none; display: flex; align-items: center; padding: 0 0 0 16px; justify-content: space-between; }
.facts { display: flex; gap: 31px; padding-right: 68px; }
.rules { margin-right: 14px; }
```
